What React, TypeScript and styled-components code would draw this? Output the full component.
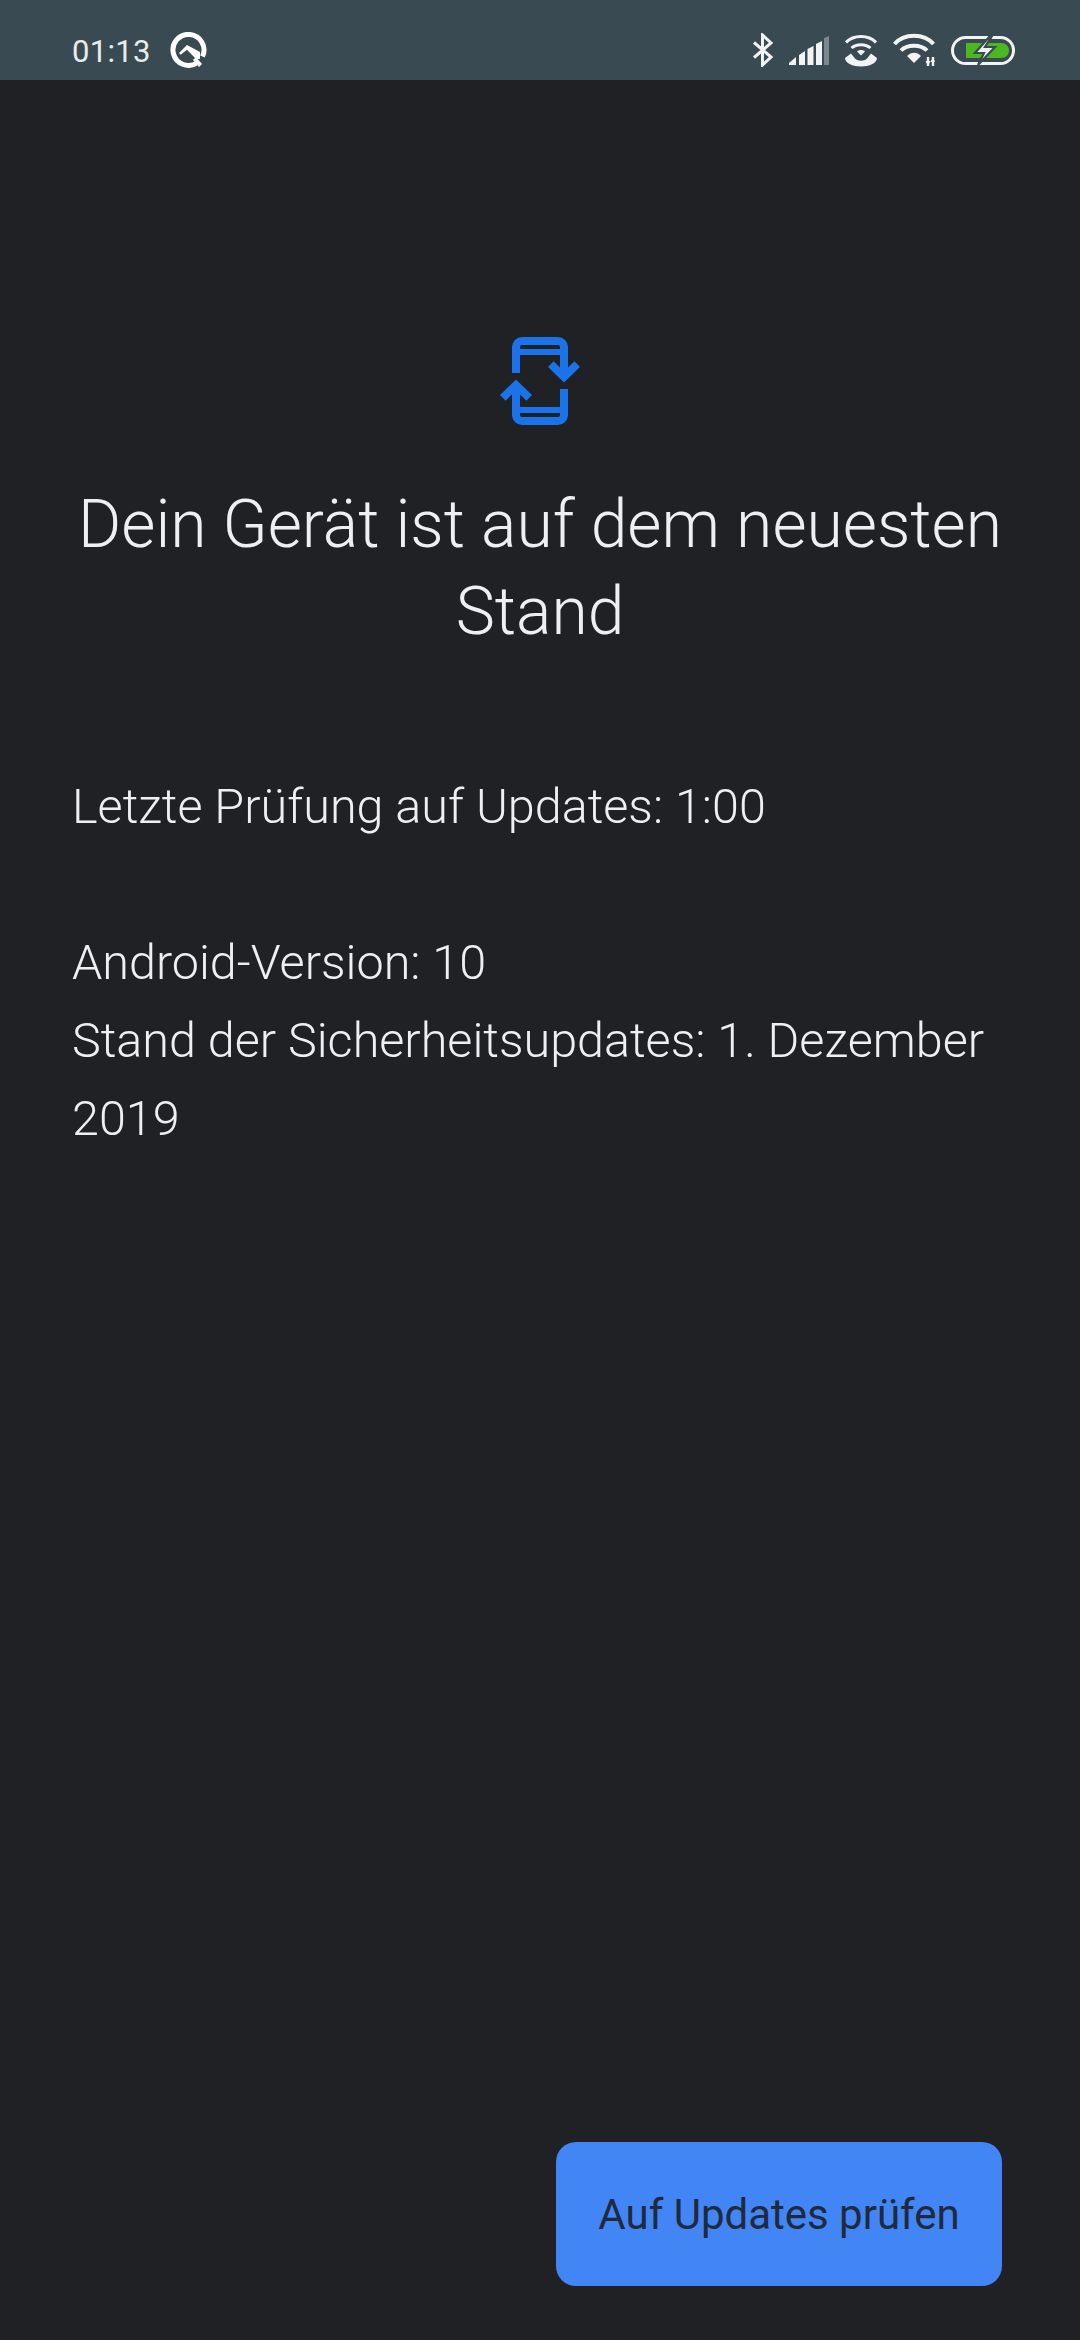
import React from "react";
import styled, { createGlobalStyle } from "styled-components";

const GlobalStyle = createGlobalStyle`
  html, body {
    margin: 0;
    padding: 0;
    background: #202124;
  }
`;

const App = () => {
  return (
    <>
      <GlobalStyle />
      <Page>
        <StatusBar>
          <StatusLeft>
            <Time>01:13</Time>
            <QIcon />
          </StatusLeft>
          <StatusRight>
            <BluetoothIcon />
            <SignalIcon />
            <HotspotIcon />
            <WifiIcon />
            <BatteryIcon />
          </StatusRight>
        </StatusBar>
        <Main>
          <IconHolder>
            <UpdateIcon />
          </IconHolder>
          <Title>Dein Gerät ist auf dem neuesten Stand</Title>
          <Line>Letzte Prüfung auf Updates: 1:00</Line>
          <Details>
            <Line>Android-Version: 10</Line>
            <Line>Stand der Sicherheitsupdates: 1. Dezember 2019</Line>
          </Details>
        </Main>
        <Footer>
          <CheckButton>Auf Updates prüfen</CheckButton>
        </Footer>
      </Page>
    </>
  );
};

export default App;

const QIcon = () => (
  <svg width="37" height="36" viewBox="0 0 37 36">
    <path
      d="M27.5 30.5 A15.5 15.5 0 1 1 32.5 24.5"
      fill="none"
      stroke="#fff"
      strokeWidth="5"
    />
    <path d="M9 21 L17 13 L30 20 L30 27 L26 27 L17 17.7 L10.7 22.7 Z" fill="#fff" />
    <path d="M23 28 L29 35 L32 32 L26 25 Z" fill="#fff" />
  </svg>
);

const BluetoothIcon = () => (
  <svg width="20" height="34" viewBox="0 0 20 34">
    <path
      d="M1 9.5 L18 24 L9.5 32 V2 L18 10 L1 24.5"
      fill="none"
      stroke="#f1f3f4"
      strokeWidth="3"
    />
  </svg>
);

const SignalIcon = () => (
  <svg width="40" height="29" viewBox="0 0 40 29">
    <path d="M0 29 V27 L7 21 V29 Z" fill="#f1f3f4" />
    <path d="M10 29 V19 L16 15 V29 Z" fill="#f1f3f4" />
    <path d="M18.5 29 V13 L24.5 10 V29 Z" fill="#f1f3f4" />
    <path d="M27 29 V8 L33 5 V29 Z" fill="#f1f3f4" />
    <path d="M35 29 V2 L40 0 V29 Z" fill="#7c888d" />
  </svg>
);

const HotspotIcon = () => (
  <svg width="32" height="33" viewBox="0 0 32 33">
    <g fill="none" stroke="#f1f3f4" strokeWidth="3">
      <path d="M1 8.5 C8.5 0.5 23.5 0.5 31 8.5" />
      <path d="M6.5 14 C11.5 9.5 20.5 9.5 25.5 14" />
    </g>
    <path d="M12 17.5 C14 15.5 18 15.5 20 17.5 L16 21.5 Z" fill="#f1f3f4" />
    <path
      d="M0 24 L6 19.5 L10 24.5 C13 27.5 19 27.5 22 24.5 L26 19.5 L32 24 C32 29 24 32.5 16 32.5 C8 32.5 0 29 0 24 Z"
      fill="#f1f3f4"
    />
  </svg>
);

const WifiIcon = () => (
  <svg width="42" height="34" viewBox="0 0 42 34">
    <g fill="none" stroke="#f1f3f4" strokeWidth="4">
      <path d="M1.5 11 C11 0 31 0 40.5 11" />
      <path d="M8 17.5 C14 11 28 11 34 17.5" />
    </g>
    <path d="M14 23 C18 18.5 24.5 18.5 28 23 L21 30 Z" fill="#f1f3f4" />
    <g stroke="#f1f3f4" strokeWidth="2.4">
      <path d="M35 24 V33" />
      <path d="M40 24 V33" />
    </g>
    <path d="M32.5 28 L37.5 28 L35 33 Z M37.5 29 L42 29 L40 24 Z" fill="#f1f3f4" />
  </svg>
);

const BatteryIcon = () => (
  <svg width="64" height="29" viewBox="0 0 64 29">
    <rect
      x="1.5"
      y="1.5"
      width="61"
      height="26"
      rx="13"
      fill="none"
      stroke="#f1f3f4"
      strokeWidth="3"
    />
    <path
      d="M15 7 H50 C55 7 58 10.5 58 14.5 C58 18.5 55 22 50 22 H15 Z"
      fill="#4cb81f"
    />
    <path
      d="M39 0 L24 17 H33 L27 29 L44 11 H34 L41 0 Z"
      fill="#f1f3f4"
      stroke="#394a52"
      strokeWidth="2.2"
    />
  </svg>
);

const UpdateIcon = () => (
  <svg width="84" height="88" viewBox="0 0 84 88">
    <g fill="none" stroke="#1a73e8" strokeWidth="8">
      <path d="M18 36 V10 a6 6 0 0 1 6-6 H60 a6 6 0 0 1 6 6 V39" />
      <path d="M18 47 V78 a6 6 0 0 0 6 6 H60 a6 6 0 0 0 6-6 V52" />
      <path d="M52.8 27.2 L66 40 L79.2 27.2" />
      <path d="M4.8 60.8 L18 48 L31.2 60.8" />
    </g>
    <g fill="none" stroke="#1a73e8" strokeWidth="6">
      <path d="M18 15 H66" />
      <path d="M18 73 H66" />
    </g>
  </svg>
);

const Page = styled.div`
  display: flex;
  flex-direction: column;
  width: 1080px;
  height: 2340px;
  background-color: #202124;
  font-family: Roboto, "Liberation Sans", sans-serif;
  overflow: hidden;
`;

const StatusBar = styled.div`
  display: flex;
  justify-content: space-between;
  align-items: center;
  height: 80px;
  padding: 20px 65px 0 72px;
  background-color: #394a52;
  box-sizing: border-box;
`;

const StatusLeft = styled.div`
  display: flex;
  align-items: center;
  gap: 19px;
`;

const StatusRight = styled.div`
  display: flex;
  align-items: center;
  gap: 16px;
`;

const Time = styled.span`
  margin-top: 2px;
  font-size: 31px;
  color: #e8ecee;
  letter-spacing: 0.3px;
`;

const Main = styled.div`
  flex: 1;
  padding: 257px 72px 0;
`;

const IconHolder = styled.div`
  display: flex;
  justify-content: center;
`;

const Title = styled.h1`
  margin: 56px 0 0;
  font-size: 66px;
  font-weight: 300;
  line-height: 87px;
  text-align: center;
  color: #eeeff0;
`;

const Line = styled.p`
  margin: 0;
  margin-top: 113px;
  font-size: 48.5px;
  font-weight: 300;
  line-height: 78px;
  color: #eeeff0;
`;

const Details = styled.div`
  margin-top: 78px;

  ${Line} {
    margin-top: 0;
  }
`;

const Footer = styled.div`
  display: flex;
  justify-content: flex-end;
  padding: 0 78px 54px 0;
`;

const CheckButton = styled.button`
  width: 446px;
  height: 144px;
  border: none;
  border-radius: 20px;
  background-color: #4285f4;
  color: #202a3c;
  font-family: Roboto, "Liberation Sans", sans-serif;
  font-size: 42px;
`;
